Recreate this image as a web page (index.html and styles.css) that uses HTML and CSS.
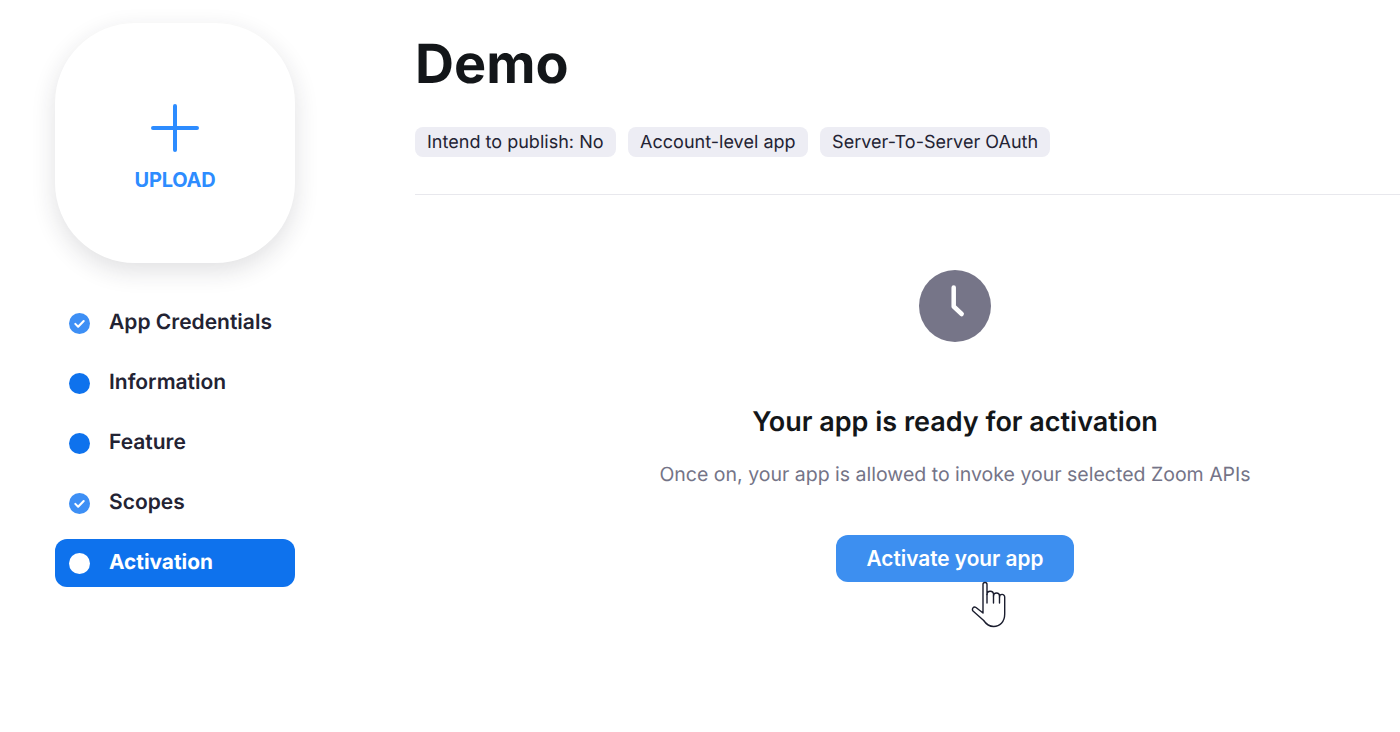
FILE: index.html
```html
<!DOCTYPE html>
<html lang="en">
<head>
<meta charset="utf-8">
<title>Demo</title>
<link rel="stylesheet" href="styles.css">
</head>
<body>
<div class="page">
  <aside class="sidebar">
    <button class="upload">
      <svg class="plus" width="48" height="48" viewBox="0 0 48 48"><path d="M24 2v44M2 24h44" fill="none" stroke="#2d8cff" stroke-width="4" stroke-linecap="round"/></svg>
      <span class="upload-label">UPLOAD</span>
    </button>
    <nav class="steps">
      <a class="step"><svg class="dot" viewBox="0 0 22 22"><circle cx="11" cy="11" r="11" fill="#3d8ff5"/><path d="M6.6 11.400l3 3 5.800-6" fill="none" stroke="#fff" stroke-width="2.200" stroke-linecap="round" stroke-linejoin="round"/></svg>App Credentials</a>
      <a class="step"><svg class="dot" viewBox="0 0 22 22"><circle cx="11" cy="11" r="11" fill="#0e72ed"/></svg>Information</a>
      <a class="step"><svg class="dot" viewBox="0 0 22 22"><circle cx="11" cy="11" r="11" fill="#0e72ed"/></svg>Feature</a>
      <a class="step"><svg class="dot" viewBox="0 0 22 22"><circle cx="11" cy="11" r="11" fill="#3d8ff5"/><path d="M6.6 11.400l3 3 5.800-6" fill="none" stroke="#fff" stroke-width="2.200" stroke-linecap="round" stroke-linejoin="round"/></svg>Scopes</a>
      <a class="step active"><svg class="dot" viewBox="0 0 22 22"><circle cx="11" cy="11" r="11" fill="#fff"/></svg>Activation</a>
    </nav>
  </aside>
  <main class="main">
    <h1 class="title">Demo</h1>
    <div class="tags">
      <span class="tag">Intend to publish: No</span>
      <span class="tag">Account-level app</span>
      <span class="tag">Server-To-Server OAuth</span>
    </div>
    <hr class="rule">
    <section class="activation">
      <svg class="clock" width="72" height="72" viewBox="0 0 72 72"><circle cx="36" cy="36" r="36" fill="#767588"/><path d="M34.700 17.500v19l8 7.500" fill="none" stroke="#fff" stroke-width="4.500" stroke-linecap="round" stroke-linejoin="round"/></svg>
      <h2 class="heading">Your app is ready for activation</h2>
      <p class="sub">Once on, your app is allowed to invoke your selected Zoom APIs</p>
      <button class="activate">Activate your app</button>
    </section>
  </main>
  <svg class="cursor" width="36" height="50" viewBox="0 0 36 50"><path d="M12 33V4.500a2 2 0 0 1 4 0V14.500a3.250 3.250 0 0 1 6.500 0V16a3 3 0 0 1 6 0V17a2.600 2.600 0 0 1 5.200 0V34c0 8-5 12.500-11 12.500-5 0-8-3-10-6L2 31c-1.500-2 .5-5 3-3.500z" fill="#fff" stroke="#1a1d2e" stroke-width="1.400" stroke-linejoin="round"/><path d="M16 14.500V23M22.500 16V23M28.500 17V23" fill="none" stroke="#1a1d2e" stroke-width="1.400" stroke-linecap="round"/></svg>
</div>
</body>
</html>
```
FILE: styles.css
```css
* { box-sizing: border-box; }
html, body { margin: 0; height: 100%; background: #fff; }
body { font-family: Inter, "Noto Sans", sans-serif; overflow: hidden; text-rendering: geometricPrecision; }
.page { position: relative; display: flex; height: 732px; width: 1400px; overflow: hidden; }
.sidebar { flex: none; width: 240px; margin-left: 55px; padding-top: 23px; }
.upload {
  display: flex; flex-direction: column; align-items: center;
  width: 240px; height: 240px; padding: 81px 0 0;
  background: #fff; border: 0; border-radius: 80px;
  box-shadow: 0 8px 24px rgba(35, 35, 51, 0.14);
  font-family: inherit;
}
.plus { display: block; }
.upload-label { margin-top: 16px; font-size: 20px; line-height: 24px; font-weight: 700; color: #2d8cff; letter-spacing: -0.2px; }
.steps { display: flex; flex-direction: column; gap: 12px; margin-top: 36px; }
.step {
  display: flex; align-items: center; gap: 19px; height: 48px; padding-left: 14px;
  border-radius: 12px; font-size: 21px; line-height: 26px; font-weight: 600; color: #232333;
}
.step.active { background: #0e72ed; color: #fff; font-weight: 700; font-size: 20.800px; }
.dot { width: 21px; height: 21px; flex: none; }
.main { flex: none; width: 1080px; margin-left: 120px; }
.title { margin: 0; padding-top: 33px; font-size: 54px; line-height: 64px; font-weight: 700; color: #131619; }
.tags { display: flex; gap: 12.500px; margin-top: 30px; }
.tag { height: 30px; padding: 0 12px; background: #ededf4; border-radius: 8px; font-size: 18px; line-height: 31px; letter-spacing: 0.020em; letter-spacing: 0.02px; color: #232333; white-space: nowrap; }
.rule { height: 1px; margin: 37px 0 0; border: 0; background: #e8e8ed; }
.activation { display: flex; flex-direction: column; align-items: center; padding-top: 75px; }
.clock { display: block; }
.heading { margin: 61px 0 0; font-size: 27px; line-height: 38px; font-weight: 600; color: #131619; }
.sub { margin: 19px 0 0; font-size: 19.500px; line-height: 28px; color: #747487; }
.activate {
  width: 238px; height: 47px; margin-top: 47px; padding: 0; border: 0; border-radius: 12px;
  background: #3d8ff0; color: #fff; font-family: inherit; font-size: 20.800px; font-weight: 600;
}
.cursor { position: absolute; left: 971px; top: 580px; }
```
